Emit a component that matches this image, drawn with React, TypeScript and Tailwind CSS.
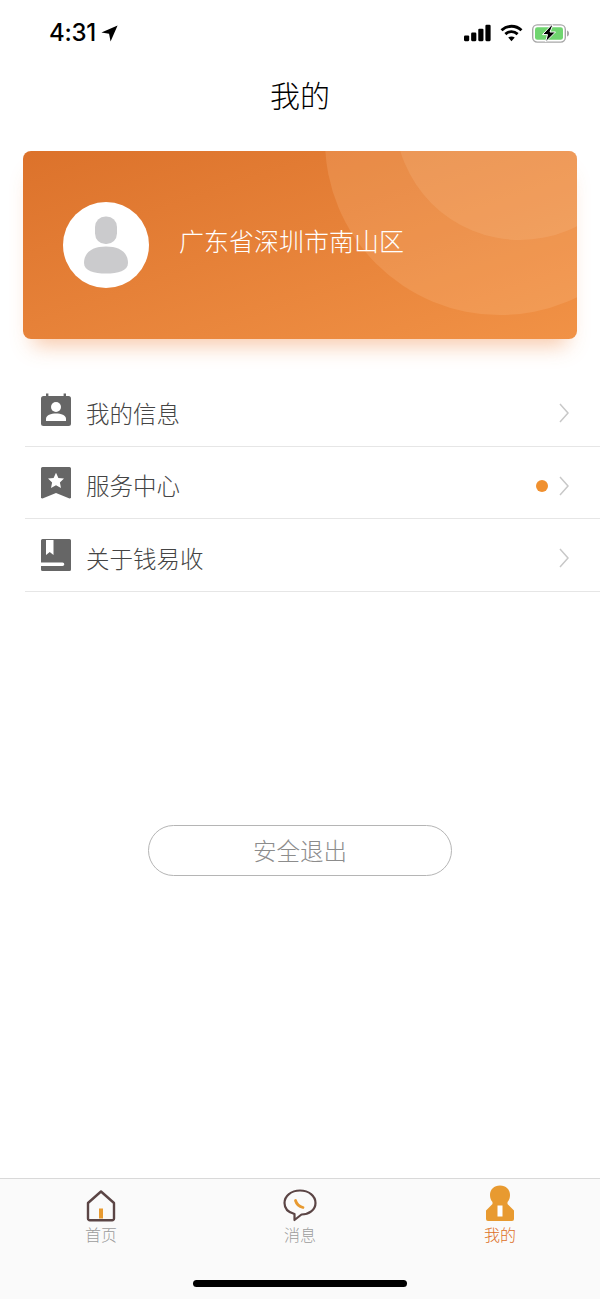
import { ReactNode } from 'react'

const CJK = "font-['Noto_Sans_CJK_SC','Noto_Sans',sans-serif]"

function StatusBar() {
  return (
    <div className="flex h-[64px] shrink-0 items-center justify-between pl-[49px] pr-[30px] pt-[2px]">
      <div className="flex items-center gap-[5px]">
        <span className="font-['Inter',sans-serif] text-[24px] leading-none font-medium tracking-[-0.3px] text-black">4:31</span>
        <svg width="17" height="17" viewBox="0 0 16 16">
          <path d="M15.6 0.4 L0.4 7 L7.6 8.2 L9 15.6 Z" fill="#000" />
        </svg>
      </div>
      <div className="flex items-center gap-[9px]">
        <svg width="27" height="18" viewBox="0 0 28 18">
          <rect x="0" y="11.5" width="5.4" height="6" rx="1.2" fill="#000" />
          <rect x="7.4" y="8.5" width="5.4" height="9" rx="1.2" fill="#000" />
          <rect x="14.8" y="4.5" width="5.4" height="13" rx="1.2" fill="#000" />
          <rect x="22.2" y="0.5" width="5.4" height="17" rx="1.2" fill="#000" />
        </svg>
        <svg width="23" height="18" viewBox="0 0 24 18" fill="none">
          <path d="M1.6 6.2 C7.5 0.6 16.5 0.6 22.4 6.2" stroke="#000" strokeWidth="3" />
          <path d="M5.6 10.2 C9.4 6.8 14.6 6.8 18.4 10.2" stroke="#000" strokeWidth="3" />
          <path d="M12 17.6 L8.6 13.8 C10.6 12.2 13.4 12.2 15.4 13.8 Z" fill="#000" />
        </svg>
        <svg width="38" height="19" viewBox="0 0 38 19" fill="none">
          <rect x="0.7" y="0.9" width="32.6" height="17.2" rx="4.5" stroke="#a8a8a8" strokeWidth="1.4" />
          <rect x="3" y="3.2" width="28" height="12.6" rx="2.4" fill="#6fd56f" />
          <path d="M35 6.5 C36.6 7 37 8.2 37 9.5 C37 10.8 36.6 12 35 12.5 Z" fill="#a8a8a8" />
          <path d="M19.5 1 L10.5 10.6 H15.5 L13.5 18 L23.5 8 H18 L20.8 1 Z" fill="#000" stroke="#fff" strokeWidth="1" />
        </svg>
      </div>
    </div>
  )
}

function CalendarIcon() {
  return (
    <svg width="32" height="34" viewBox="0 0 32 34" fill="none">
      <rect x="1" y="3" width="30" height="30" rx="2.5" fill="#666" />
      <rect x="6" y="0.5" width="2.4" height="5" fill="#666" />
      <rect x="23.6" y="0.5" width="2.4" height="5" fill="#666" />
      <circle cx="16" cy="14" r="5" fill="#fff" />
      <path d="M6 26 C6 22 11 20.5 16 20.5 C21 20.5 26 22 26 26 V28 H6 Z" fill="#fff" />
    </svg>
  )
}

function BookmarkIcon() {
  return (
    <svg width="32" height="34" viewBox="0 0 32 34" fill="none">
      <path d="M2.5 1 H29.5 A1.5 1.5 0 0 1 31 2.5 V32 L29.5 32.6 L16 27 L2.5 32.6 L1 32 V2.5 A1.5 1.5 0 0 1 2.5 1 Z" fill="#666" />
      <path d="M16 6.8 L18.4 11.9 L24 12.6 L19.9 16.4 L21 22 L16 19.2 L11 22 L12.1 16.4 L8 12.6 L13.6 11.9 Z" fill="#fff" />
    </svg>
  )
}

function BookIcon() {
  return (
    <svg width="32" height="34" viewBox="0 0 32 34" fill="none">
      <path d="M2.5 1 H29.5 A1.5 1.5 0 0 1 31 2.5 V31.5 A1.5 1.5 0 0 1 29.5 33 H2.5 A1.5 1.5 0 0 1 1 31.5 V2.5 A1.5 1.5 0 0 1 2.5 1 Z" fill="#666" />
      <path d="M6 2 H13.5 V17 L9.75 14 L6 17 Z" fill="#fff" />
      <path d="M1 24.5 H22.5 A1.8 1.8 0 0 1 22.5 28.1 H1 Z" fill="#fff" />
    </svg>
  )
}

function Row({ icon, label, dot }: { icon: ReactNode; label: string; dot?: boolean }) {
  return (
    <div className="flex h-[72.5px] items-center border-b border-[#e6e6e6] pr-[31px] pt-[7px]">
      <div className="ml-[15px] flex w-[32px] -translate-y-[3px] justify-center">{icon}</div>
      <span className="ml-[14px] flex-1 text-[23.5px] leading-none font-light text-[#444]">{label}</span>
      {dot && <span className="mr-[11px] h-[12px] w-[12px] rounded-full bg-[#f0902f]" />}
      <svg width="10" height="20" viewBox="0 0 10 20" fill="none">
        <path d="M1 1 L9 10 L1 19" stroke="#c8c8c8" strokeWidth="1.5" />
      </svg>
    </div>
  )
}

function Tab({ icon, label, active }: { icon: ReactNode; label: string; active?: boolean }) {
  return (
    <div className="flex w-[200px] flex-col items-center">
      <div className="flex h-[37px] items-end justify-center">{icon}</div>
      <span className={`mt-[2px] text-[16px] leading-[20px] font-light ${active ? 'text-[#dd6f26]' : 'text-[#9c9c9c]'}`}>{label}</span>
    </div>
  )
}

export default function App() {
  return (
    <div className={`${CJK} flex h-[1299px] w-[600px] flex-col overflow-hidden bg-white`}>
      <StatusBar />
      <div className="flex h-[64px] shrink-0 items-center justify-center pb-[4px] text-[30px] leading-none font-light text-black">我的</div>

      <div className="relative mx-[23px] mt-[23px] h-[188px] shrink-0 rounded-[8px] shadow-[0_16px_20px_-10px_rgba(240,130,60,0.45)]">
        <div className="relative flex h-full items-center overflow-hidden rounded-[8px] bg-gradient-to-br from-[#dc722b] to-[#f19246] pl-[40px]">
          <div className="absolute left-[302px] top-[-186px] h-[350px] w-[350px] rounded-full bg-[#ffc896]/[0.2]" />
          <div className="absolute left-[372px] top-[-161px] h-[250px] w-[250px] rounded-full bg-[#ffd2a8]/[0.16]" />
          <div className="relative flex h-[86px] w-[86px] items-center justify-center rounded-full bg-white">
            <svg width="46" height="58" viewBox="0 0 46 58">
              <rect x="12" y="0.5" width="22" height="27.5" rx="10.5" fill="#cbcbcd" />
              <path d="M23 30.5 C36 30.5 45 36 45 47 C45 55 35 57.5 23 57.5 C11 57.5 1 55 1 47 C1 36 10 30.5 23 30.5 Z" fill="#cbcbcd" />
            </svg>
          </div>
          <span className="relative ml-[30px] mb-[10px] text-[25px] leading-none font-light text-white">广东省深圳市南山区</span>
        </div>
      </div>

      <div className="ml-[25px] mt-[35px] shrink-0">
        <Row icon={<CalendarIcon />} label="我的信息" />
        <Row icon={<BookmarkIcon />} label="服务中心" dot />
        <Row icon={<BookIcon />} label="关于钱易收" />
      </div>

      <div className="mt-[233px] flex shrink-0 justify-center">
        <div className="flex h-[51px] w-[304px] items-center justify-center rounded-full border border-[#b5b5b5] pt-[2px] text-[23.5px] leading-none font-light text-[#8c8c8c]">
          安全退出
        </div>
      </div>

      <div className="relative mt-auto flex h-[121px] shrink-0 flex-col border-t border-[#d9d9d9] bg-[#fafafa]">
        <div className="flex pt-[6px]">
          <div className="pl-[1px]">
            <Tab
              label="首页"
              icon={
                <svg width="30" height="32" viewBox="0 0 30 32" fill="none">
                  <path d="M15 1.5 L28 13 V28.5 A1.8 1.8 0 0 1 26.2 30.3 H3.8 A1.8 1.8 0 0 1 2 28.5 V13 Z" stroke="#5b4545" strokeWidth="2.4" strokeLinejoin="round" />
                  <rect x="13" y="18.5" width="4" height="10" fill="#e89a30" />
                </svg>
              }
            />
          </div>
          <div className="ml-[-1px]">
            <Tab
              label="消息"
              icon={
                <svg width="34" height="33" viewBox="0 0 34 33" fill="none">
                  <path d="M17 1.5 C25.8 1.5 32.5 6.8 32.5 14 C32.5 21.2 25.8 25.5 18.5 25.5 L11.5 31 L11.5 25 C5.5 23.5 1.5 19.5 1.5 14 C1.5 6.8 8.2 1.5 17 1.5 Z" stroke="#5b4545" strokeWidth="2.2" strokeLinejoin="round" />
                  <path d="M12.5 11.5 C13.5 15 16 17.5 20 18.5" stroke="#e89a30" strokeWidth="2.8" strokeLinecap="round" />
                </svg>
              }
            />
          </div>
          <Tab
            active
            label="我的"
            icon={
              <svg width="30" height="37" viewBox="0 0 30 37">
                <path d="M15 0.5 C21 0.5 25 4.5 25 10 C25 13 24 15.5 22.5 17 L22.5 19 L29 25.5 V34 A2 2 0 0 1 27 36 H3 A2 2 0 0 1 1 34 V25.5 L7.5 19 L7.5 17 C6 15.5 5 13 5 10 C5 4.5 9 0.5 15 0.5 Z" fill="#e89a30" />
                <rect x="12.5" y="20.5" width="5" height="11" fill="#fff" />
              </svg>
            }
          />
        </div>
        <div className="absolute bottom-[12px] left-[193px] h-[7px] w-[214px] rounded-full bg-black" />
      </div>
    </div>
  )
}
